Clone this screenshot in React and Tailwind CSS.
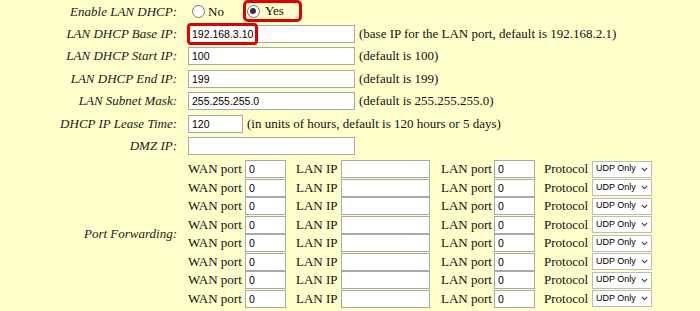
import React from 'react';

const serif = "font-['Liberation_Serif',serif]";
const sans = "font-['Liberation_Sans',Arial,sans-serif]";

const topRows = [
  { label: 'LAN DHCP Base IP:', value: '192.168.3.10', note: '(base IP for the LAN port, default is 192.168.2.1)', h: 'h-[22px]', mark: true },
  { label: 'LAN DHCP Start IP:', value: '100', note: '(default is 100)', h: 'h-[22px]' },
  { label: 'LAN DHCP End IP:', value: '199', note: '(default is 199)', h: 'h-[23px]' },
  { label: 'LAN Subnet Mask:', value: '255.255.255.0', note: '(default is 255.255.255.0)', h: 'h-[22px]' },
];

const rowHeights = ['h-[18px]', 'h-[19px]', 'h-[18px]', 'h-[19px]', 'h-[18px]', 'h-[19px]', 'h-[18px]', 'h-[19px]'];

const Field = ({ value = '', className = '' }) => (
  <input
    readOnly
    value={value}
    className={`${sans} h-[18px] border border-[#a9a9a9] bg-white px-[3px] text-[10.5px] text-black outline-none ${className}`}
  />
);

const Radio = ({ checked }) => (
  <span className="flex h-[13px] w-[13px] shrink-0 items-center justify-center rounded-full border border-[#767676] bg-white">
    {checked && <span className="h-[6px] w-[6px] rounded-full bg-[#333]" />}
  </span>
);

const Label = ({ children }) => (
  <div className={`${serif} w-[178px] shrink-0 pr-[1px] text-right text-[13px] italic text-[#1a1a1a]`}>{children}</div>
);

const ProtoSelect = () => (
  <span className={`${sans} flex h-[17px] w-[60px] shrink-0 items-center whitespace-nowrap border border-[#bcbcbc] bg-white pl-[3px] pr-[3px] text-[9px] text-black`}>
    <span>UDP Only</span>
    <svg className="ml-auto" width="7" height="5" viewBox="0 0 7 5" fill="none">
      <path d="M0.8 0.8 L3.5 3.6 L6.2 0.8" stroke="#444" strokeWidth="1.1" />
    </svg>
  </span>
);

export default function App() {
  return (
    <div className="min-h-[311px] w-[700px] overflow-hidden bg-[#ffffcc] text-[#111]">
      {/* Enable LAN DHCP */}
      <div className="flex h-[23px] items-center">
        <Label>Enable LAN DHCP:</Label>
        <div className={`${serif} flex h-full items-center pl-[14px] text-[13px]`}>
          <Radio />
          <span className="ml-[3px]">No</span>
          <span className="ml-[19px] flex h-[22px] w-[59px] items-center self-start rounded-[5px] border-[3px] border-[#e10000] pl-[1px]">
            <Radio checked />
            <span className="ml-[5px]">Yes</span>
          </span>
        </div>
      </div>

      {topRows.map((r) => (
        <div key={r.label} className={`flex ${r.h} items-center`}>
          <Label>{r.label}</Label>
          <div className="flex items-center pl-[10px]">
            <span className="relative flex">
              <Field value={r.value} className="w-[167px]" />
              {r.mark && (
                <span className="pointer-events-none absolute left-[-1px] top-[-2px] h-[22px] w-[71px] rounded-[4px] border-[3px] border-[#e10000]" />
              )}
            </span>
            <span className={`${serif} ml-[4px] whitespace-nowrap text-[13px]`}>{r.note}</span>
          </div>
        </div>
      ))}

      {/* Lease time */}
      <div className="flex h-[23px] items-center">
        <Label>DHCP IP Lease Time:</Label>
        <div className="flex items-center pl-[10px]">
          <Field value="120" className="w-[55px]" />
          <span className={`${serif} ml-[4px] whitespace-nowrap text-[13px]`}>(in units of hours, default is 120 hours or 5 days)</span>
        </div>
      </div>

      {/* DMZ */}
      <div className="flex h-[22px] items-center">
        <Label>DMZ IP:</Label>
        <div className="flex items-center pl-[10px]">
          <Field className="w-[167px]" />
        </div>
      </div>

      {/* Port forwarding */}
      <div className="mt-[3px] flex items-center">
        <Label>Port Forwarding:</Label>
        <div className={`${serif} flex flex-col pl-[10px] text-[13px]`}>
          {rowHeights.map((h, i) => (
            <div key={i} className={`flex ${h} items-center whitespace-nowrap`}>
              <span className="w-[57px] shrink-0">WAN port</span>
              <Field value="0" className="w-[41px]" />
              <span className="w-[55px] shrink-0 pl-[10px]">LAN IP</span>
              <Field className="w-[89px]" />
              <span className="w-[64px] shrink-0 pl-[11px]">LAN port</span>
              <Field value="0" className="w-[41px]" />
              <span className="w-[57px] shrink-0 pl-[9px]">Protocol</span>
              <ProtoSelect />
            </div>
          ))}
        </div>
      </div>
    </div>
  );
}
